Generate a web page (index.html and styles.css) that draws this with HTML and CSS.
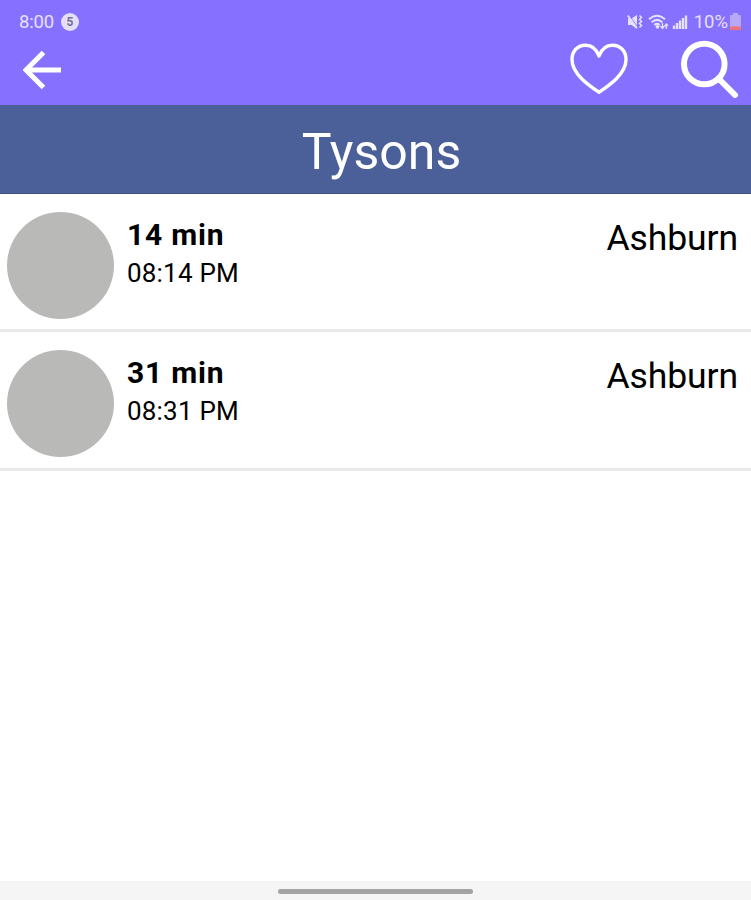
FILE: index.html
```html
<!DOCTYPE html>
<html lang="en">
<head>
    <meta charset="UTF-8">
    <meta name="viewport" content="width=device-width, initial-scale=1.0">
    <title>Tysons</title>
    <link rel="stylesheet" href="styles.css">
</head>
<body>
    <header class="app-header">
        <div class="status-bar">
            <span class="clock">8:00</span>
            <span class="notification">5</span>
            <div class="status-icons">
                <svg class="mute-icon" width="17" height="16" viewBox="0 0 17 16">
                    <path d="M1 4.500h3.500L10 1v14l-5.500-4H1z" fill="#e6e0ff"/>
                    <path d="M2 1l9 12.500" stroke="#8670ff" stroke-width="1"/>
                    <path d="M.8 1.500l9 12.500" stroke="#e6e0ff" stroke-width="1.800"/>
                    <path d="M12.500 1.500l2 2-2 2 2 2-2 2 2 2-2 2" fill="none" stroke="#e6e0ff" stroke-width="1.500"/>
                </svg>
                <svg class="wifi-icon" width="21" height="16" viewBox="0 0 21 16">
                    <path d="M1 5.200q8-7 16 0M3.700 8.200q5.300-4.600 10.600 0M6.300 11q2.700-2.200 5.400 0" fill="none" stroke="#e6e0ff" stroke-width="2"/>
                    <circle cx="9.500" cy="12.800" r="1.900" fill="#e6e0ff"/>
                    <path d="M14.500 9v5M12.500 12l2 2.500 2-2.500M18.300 15v-5M16.700 12l1.600-2 1.600 2" fill="none" stroke="#e6e0ff" stroke-width="1.300"/>
                </svg>
                <svg class="signal-icon" width="16" height="16" viewBox="0 0 16 16">
                    <path d="M2 11.500v3.500M5 9v6M8 6.500v8.500M11 4v11M14 1.500v13.500" stroke="#e6e0ff" stroke-width="2.400"/>
                </svg>
                <span class="battery-level">10%</span>
                <svg class="battery-icon" width="11" height="17" viewBox="0 0 11 17">
                    <path d="M3 0h5v2h2q1 0 1 1v13q0 1-1 1H1q-1 0-1-1V3q0-1 1-1h2z" fill="#b9a8f8"/>
                    <path d="M0 13.500h11V16q0 1-1 1H1q-1 0-1-1z" fill="#ee7277"/>
                </svg>
            </div>
        </div>
        <nav class="toolbar">
            <svg class="back-icon" width="40" height="40" viewBox="0 0 40 40">
                <path d="M38 20H3M20.500 2.500L3 20l17.500 17.500" fill="none" stroke="#fff" stroke-width="5"/>
            </svg>
            <svg class="heart-icon" width="60" height="54" viewBox="0 0 60 54">
                <path d="M30 50.300C20 43.500 3 32 3 17.500C3 8.700 9 3.200 16.500 3.200C23 3.200 27.500 7 30 14C32.500 7 37 3.200 43.500 3.200C51 3.200 57 8.700 57 17.500C57 32 40 43.500 30 50.300Z" fill="none" stroke="#fff" stroke-width="3.400" stroke-linejoin="round"/>
            </svg>
            <svg class="search-icon" width="60" height="60" viewBox="0 0 60 60">
                <circle cx="24.300" cy="24" r="20.300" fill="none" stroke="#fff" stroke-width="6"/>
                <path d="M38.500 38.500L55 55" stroke="#fff" stroke-width="6" stroke-linecap="round"/>
            </svg>
        </nav>
    </header>

    <h1 class="station-title">Tysons</h1>

    <main class="train-list">
        <div class="train">
            <div class="line-circle"></div>
            <div class="arrival">
                <div class="minutes">14 min</div>
                <div class="time">08:14 PM</div>
            </div>
            <div class="destination">Ashburn</div>
        </div>
        <div class="train">
            <div class="line-circle"></div>
            <div class="arrival">
                <div class="minutes">31 min</div>
                <div class="time">08:31 PM</div>
            </div>
            <div class="destination">Ashburn</div>
        </div>
    </main>

    <footer class="gesture-bar">
        <div class="gesture-handle"></div>
    </footer>
</body>
</html>
```

FILE: styles.css
```css
* {
    box-sizing: border-box;
}

body {
    margin: 0;
    height: 100vh;
    display: flex;
    flex-direction: column;
    background: #fff;
    color: #000;
    font-family: Roboto, "Liberation Sans", sans-serif;
    overflow: hidden;
}

svg {
    display: block;
    flex: none;
}

.app-header {
    height: 105px;
    background: #8670ff;
}

.status-bar {
    display: flex;
    align-items: center;
    height: 40px;
    padding: 3px 10px 0 19px;
    color: #e6e0ff;
    font-size: 18.5px;
}

.clock {
    letter-spacing: -0.2px;
}

.notification {
    width: 18px;
    height: 18px;
    margin-left: 7px;
    border-radius: 50%;
    background: #e4defa;
    color: #77718f;
    font-size: 12px;
    font-weight: bold;
    line-height: 18px;
    text-align: center;
}

.status-icons {
    display: flex;
    align-items: center;
    margin-left: auto;
}

.wifi-icon {
    margin-left: 4px;
}

.signal-icon {
    margin-left: 3px;
}

.battery-level {
    margin: 0 2px 0 6px;
}

.toolbar {
    display: flex;
    align-items: flex-start;
    padding: 0 11px 0 22.5px;
}

.back-icon {
    margin-top: 9.5px;
}

.heart-icon {
    margin: 2px 51px 0 auto;
}

.station-title {
    height: 89px;
    margin: 0;
    padding-left: 12px;
    background: #4b5f99;
    border-bottom: 1px solid #3f5189;
    color: #fff;
    font-size: 50px;
    font-weight: normal;
    line-height: 94px;
    text-align: center;
}

.train-list {
    flex: 1;
}

.train {
    display: flex;
    height: 138.4px;
    padding: 17.8px 13px 0 7px;
    border-bottom: 3px solid #e9e9e9;
}

.line-circle {
    width: 107px;
    height: 107px;
    border-radius: 50%;
    background: #b9b9b8;
}

.arrival {
    margin-left: 13px;
    padding-top: 4px;
}

.minutes {
    font-size: 30px;
    font-weight: bold;
    letter-spacing: 0.8px;
    line-height: 38px;
}

.time {
    font-size: 26px;
    letter-spacing: 0.2px;
    line-height: 38px;
}

.destination {
    margin-left: auto;
    padding-top: 5px;
    font-size: 35.5px;
    letter-spacing: -0.1px;
    line-height: 42px;
}

.gesture-bar {
    height: 19px;
    padding-top: 8px;
    background: #f5f5f5;
}

.gesture-handle {
    width: 195px;
    height: 5px;
    margin: 0 auto;
    border-radius: 3px;
    background: #a3a3a3;
}
```
